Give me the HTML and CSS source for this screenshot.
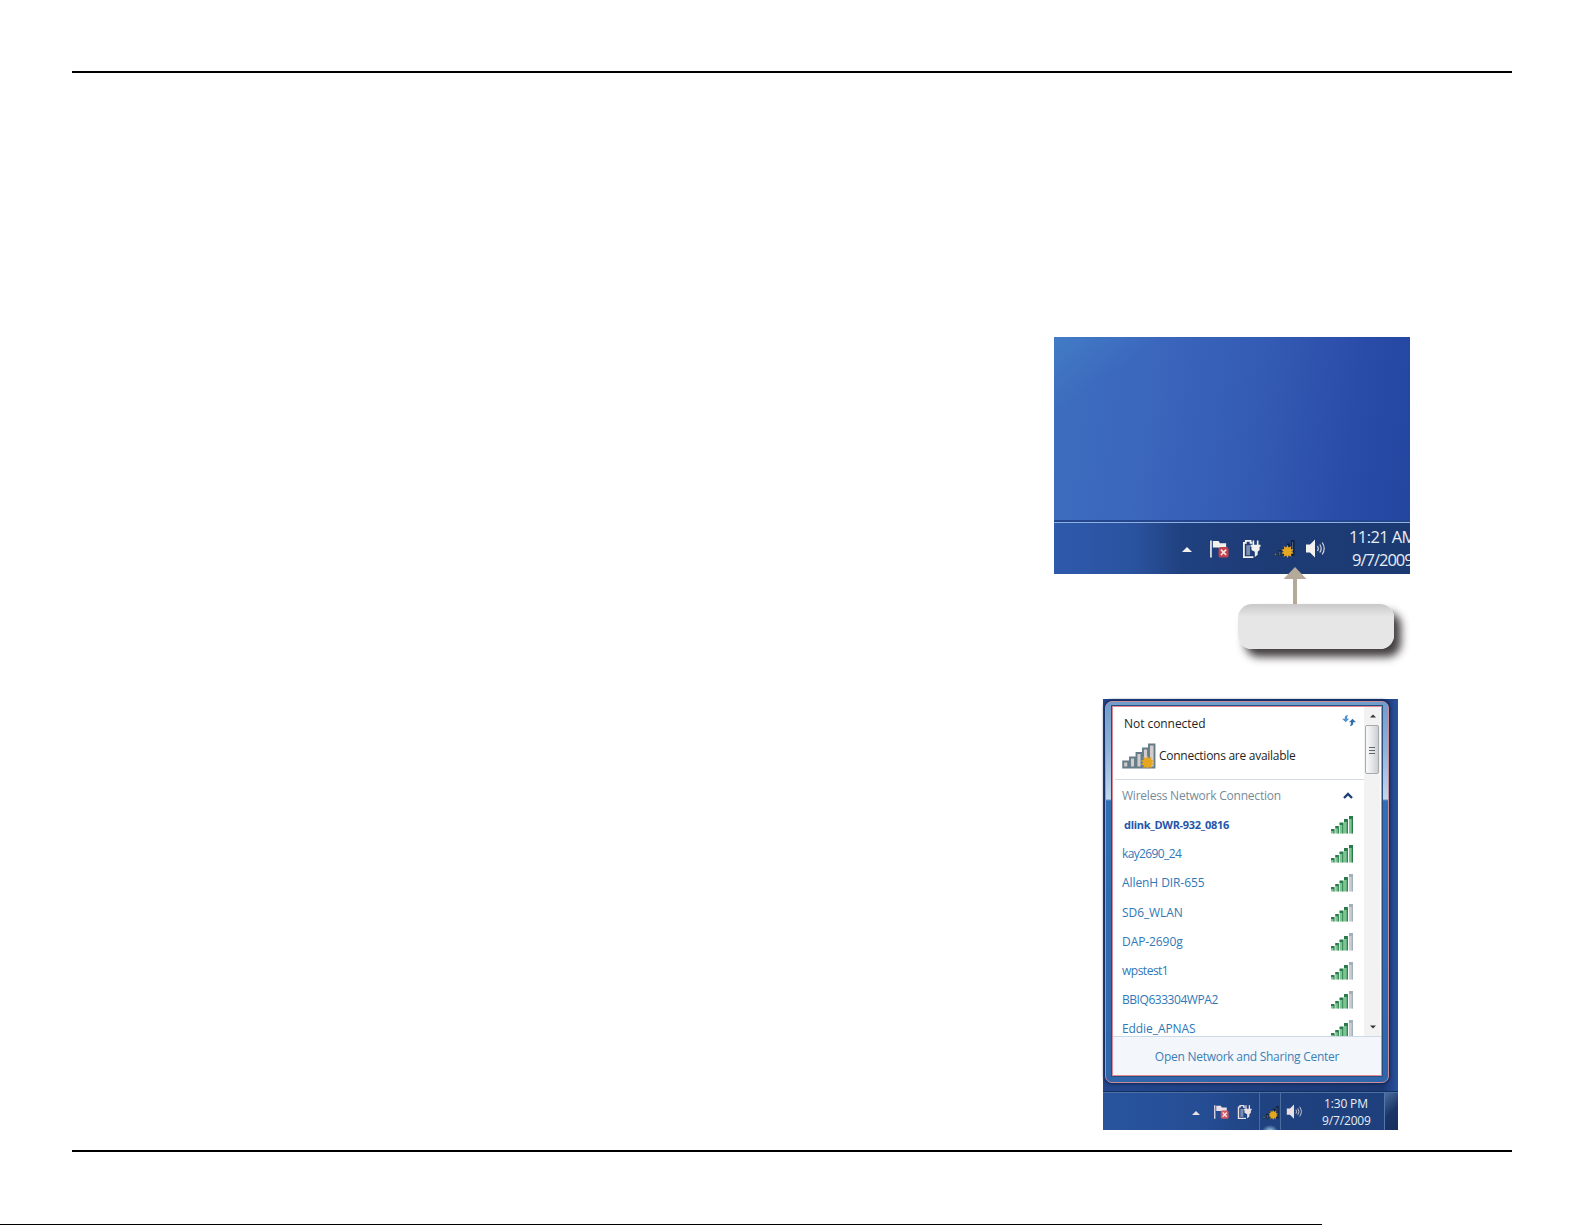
FILE: index.html
```
<!DOCTYPE html>
<html lang="en">
<head>
  <meta charset="UTF-8" />
  <meta name="viewport" content="width=device-width, initial-scale=1.0" />
  <title>Connect to a Wireless Network</title>
  <link rel="stylesheet" href="styles.css">
</head>
<body>
  <!-- shared icons -->
  <svg class="defs" width="0" height="0">
    <symbol id="up" viewBox="0 0 10 5"><path d="M5 0l5 5H0z" fill="currentColor"/></symbol>
    <symbol id="star" viewBox="0 0 14 14">
      <path d="M7 0l1.300 2.700 2.900-1.300-.6 2.900 3 .9-2.400 1.800 2.400 1.900-3 .8.6 2.900-2.900-1.200L7 14l-1.300-2.600-2.900 1.200.6-2.900-3-.8 2.400-1.900L.4 5.200l3-.9-.6-2.900 2.900 1.300z" fill="#e5a71f"/>
    </symbol>
    <symbol id="flag" viewBox="0 0 20 20">
      <path d="M1 1v18" stroke="currentColor" stroke-width="1.700"/>
      <path d="M3 1.500h6l1.500 2.500H17v6H10L9 8.500H3z" fill="currentColor"/>
      <rect x="9" y="8" width="10.500" height="11" rx="2" fill="var(--badge)"/>
      <path d="M11.500 10.700l5.500 5.600M17 10.700l-5.500 5.600" stroke="#ffe1df" stroke-width="1.800"/>
    </symbol>
    <symbol id="battery" viewBox="0 0 20 20">
      <path d="M12 18.500H2V3.500h2V1.500h5v2h2" fill="none" stroke="currentColor" stroke-width="1.900"/>
      <path d="M4.500 6h4v10.500h-4z" fill="currentColor" opacity=".45"/>
      <path d="M9 5.500h10.500v2h-1v3.500l-2 2v3l-3 2.500v-5.500L10 11V7.500H9z" fill="currentColor"/>
      <path d="M12 1v5M16.500 1v5" stroke="currentColor" stroke-width="1.700"/>
    </symbol>
    <symbol id="net" viewBox="0 0 22 20">
      <path d="M1 14h3v3H1zM5.500 11h3v6h-3zM10 8h3v9h-3zM14 4.500h3V17h-3zM18 1h3.500v16H18z" fill="#12223e"/>
      <path d="M1.500 14.500h2v2h-2zM6.300 12.500h1v4h-1zM10.700 9.500h.8v4h-.8zM19 3h.8v11H19z" fill="#8290a4" opacity=".75"/>
      <use href="#star" x="8" y="5.500" width="13" height="14"/>
    </symbol>
    <symbol id="sound" viewBox="0 0 20 20">
      <path d="M1 5.500h4L10 .5v18l-5-5H1z" fill="currentColor"/>
      <path d="M12.500 7q1.500 2.500 0 5M14.800 5.500q2.800 4 0 8M17.200 3.500q4 6 0 12" fill="none" stroke="currentColor" stroke-width="1.200" opacity=".85"/>
    </symbol>
    <symbol id="bars" viewBox="0 0 24 20">
      <path d="M1 14.500h3.500v4H1zM5.300 11.500h3.500v7H5.300zM9.600 8h3.700v10.500H9.600zM14 4.500h3.900v14H14z" fill="#7cc592"/>
      <path d="M1 14h3.500v2H1zM5.300 11h3.500v2.300H5.300zM9.600 7.500h3.700V10H9.600zM14 4h3.900v3H14zM3.500 14h1v4.500h-1zM7.800 11h1v7.500h-1zM12.300 7.500h1.200v11h-1.200zM16.700 4h1.200v14.500h-1.200z" fill="#2a7a4b"/>
      <path d="M19 1h4v17.500h-4z" fill="var(--last)"/>
      <path d="M19 1h4v3h-4zM21.700 1H23v17.500h-1.300z" fill="var(--last-edge)"/>
    </symbol>
  </svg>

  <hr class="rule">
  <main class="page">
    <div class="desktop">
      <div class="taskbar">
        <svg class="i-up"><use href="#up"/></svg>
        <svg class="i-flag"><use href="#flag"/></svg>
        <svg class="i-battery"><use href="#battery"/></svg>
        <svg class="i-net"><use href="#net"/></svg>
        <svg class="i-sound"><use href="#sound"/></svg>
        <div class="clock"><div>11:21 AM</div><div class="date">9/7/2009</div></div>
      </div>
    </div>

    <div class="callout">
      <svg class="pointer" viewBox="0 0 24 37"><path d="M12 0l11.500 12H14v25h-4V12H.5z" fill="#b5a999"/></svg>
    </div>

    <div class="desktop-small">
      <div class="flyout">
        <div class="panel">
          <div class="view">
            <div class="list">
              <div class="status">
                <span>Not connected</span>
                <svg class="refresh" viewBox="0 0 16 14">
                  <path d="M7 1Q3 1 3.500 5H.5l4 4 3.700-4H6Q5.500 3 7 1z" fill="#4e93cf"/>
                  <path d="M9 13q4 0 3.500-4H15.500L11.800 5 8 9h2.200q.3 2-1.200 4z" fill="#2f6fa8"/>
                </svg>
              </div>
              <div class="available">
                <svg class="bigbars" viewBox="0 0 34 27">
                  <path d="M1.200 18.500h5v6h-5zM8 14.500h5v10H8zM14.500 10h5v14.500h-5zM21 5.500h5v19h-5zM27 1.500h5.500v23H27z" fill="#d3ccca" stroke="#657d88" stroke-width="1.900"/>
                  <use href="#star" x="18" y="12.500" width="15" height="14"/>
                </svg>
                <span>Connections are available</span>
              </div>
              <div class="group">
                <span>Wireless Network Connection</span>
                <svg class="chevron" viewBox="0 0 10 7"><path d="M1 6l4-4 4 4" fill="none" stroke="#203f76" stroke-width="2.400"/></svg>
              </div>
              <div class="net dlink"><span>dlink_DWR-932_0816</span><svg class="full"><use href="#bars"/></svg></div>
              <div class="net kay"><span>kay2690_24</span><svg class="full"><use href="#bars"/></svg></div>
              <div class="net"><span>AllenH DIR-655</span><svg><use href="#bars"/></svg></div>
              <div class="net"><span>SD6_WLAN</span><svg><use href="#bars"/></svg></div>
              <div class="net"><span>DAP-2690g</span><svg><use href="#bars"/></svg></div>
              <div class="net wps"><span>wpstest1</span><svg><use href="#bars"/></svg></div>
              <div class="net bbiq"><span>BBIQ633304WPA2</span><svg><use href="#bars"/></svg></div>
              <div class="net"><span>Eddie_APNAS</span><svg><use href="#bars"/></svg></div>
            </div>
            <div class="scrollbar">
              <svg class="sb-up"><use href="#up"/></svg>
              <div class="thumb"><i></i><i></i><i></i></div>
              <svg class="sb-down"><use href="#up"/></svg>
            </div>
          </div>
          <div class="footer"><span>Open Network and Sharing Center</span></div>
        </div>
      </div>
      <div class="taskbar small">
        <svg class="i-up"><use href="#up"/></svg>
        <svg class="i-flag"><use href="#flag"/></svg>
        <svg class="i-battery"><use href="#battery"/></svg>
        <div class="active"><svg class="i-net"><use href="#net"/></svg></div>
        <svg class="i-sound"><use href="#sound"/></svg>
        <div class="clock"><div>1:30 PM</div><div class="date">9/7/2009</div></div>
        <div class="peek"></div>
      </div>
    </div>
  </main>
  <hr class="rule">
  <div class="edge"></div>
</body>
</html>
```

FILE: styles.css
```
* {
  box-sizing: border-box;
}
body {
  margin: 0;
  padding-top: 71px;
  height: 1225px;
  overflow: hidden;
  background: #fff;
  font-family: "Open Sans", "Noto Sans", sans-serif;
}
svg {
  display: block;
  flex: none;
}
.defs {
  position: absolute;
}
.rule {
  width: 1440px;
  height: 2px;
  margin: 0 0 0 72px;
  border: 0;
  background: #000;
}
.page {
  display: flex;
  flex-direction: column;
  align-items: flex-end;
  height: 1077px;
  padding-top: 264px;
}
.edge {
  width: 1322px;
  height: 1px;
  margin-top: 72px;
  background: #000;
}

/* desktop with the tray */
.desktop {
  display: flex;
  flex-direction: column;
  justify-content: flex-end;
  width: 356px;
  height: 237px;
  margin-right: 175px;
  background:
    linear-gradient(145deg, rgba(70, 135, 205, .55) 0, transparent 16%),
    linear-gradient(98deg, #3d6dbd 0%, #3b67bd 25%, #345bb4 55%, #294ca8 80%, #2345a0 100%);
}
.taskbar {
  --badge: #c2434f;
  display: flex;
  height: 54px;
  padding: 17px 0 0 128px;
  border-top: 2px solid #23468f;
  box-shadow: inset 0 1px #8fb0e2;
  background: linear-gradient(90deg, #2e59ac 0, #2a539f 22%, #204180 36%, #1d3b75 60%, #1c3a72 100%);
  color: #f3f1ee;
  overflow: hidden;
}
.i-up {
  width: 10px;
  height: 5px;
  margin-top: 8px;
}
.i-flag {
  width: 19px;
  height: 20px;
  margin-left: 18px;
}
.i-battery {
  width: 19px;
  height: 20px;
  margin-left: 13px;
}
.i-net {
  width: 22px;
  height: 20px;
  margin-left: 12px;
}
.i-sound {
  width: 20px;
  height: 20px;
  margin-left: 10px;
}
.clock {
  margin: -14px 0 0 24px;
  font-size: 16.5px;
  line-height: 23px;
  letter-spacing: -.6px;
  white-space: nowrap;
  color: #e6eef5;
}
.date {
  padding-left: 3px;
  letter-spacing: -1px;
}

/* callout */
.callout {
  position: relative;
  width: 156px;
  height: 45px;
  margin: 30px 191px 0 0;
  border-radius: 14px;
  background: linear-gradient(#c9c9c9, #e6e6e6 28%, #e6e6e6);
  box-shadow: 7px 8px 9px rgba(35, 31, 32, .85);
}
.pointer {
  position: absolute;
  left: 45px;
  top: -37px;
  width: 24px;
  height: 37px;
}

/* desktop with the network list */
.desktop-small {
  display: flex;
  flex-direction: column;
  justify-content: space-between;
  width: 295px;
  height: 431px;
  margin: 50px 187px 0 0;
  background: linear-gradient(90deg, #23468d 0, #1c3874 95%, #28529f 100%);
}
.flyout {
  width: 284px;
  height: 382px;
  margin: 2px 0 0 2px;
  padding: 4px 6px 6px;
  border: 1px solid #c98e9b;
  border-radius: 7px;
  background: linear-gradient(#6f9dcc 0, #8eb1d8 12%, #bfd5ec 25%, #c3d7ed 25.500%, #316fb5 26%, #2f66ab 100%);
  box-shadow: 0 0 3px 1px #0e2552;
}
.panel {
  height: 370px;
  border: 1px solid #de8891;
  outline: 1px solid #294d80;
  background: #fff;
}
.view {
  display: flex;
  height: 329px;
  overflow: hidden;
}
.list {
  width: 251px;
  font-size: 12px;
  line-height: 18px;
  white-space: nowrap;
  color: #2f78b8;
}
.status {
  display: flex;
  justify-content: space-between;
  height: 36px;
  padding: 8px 7px 0 11px;
  color: #241f24;
  letter-spacing: -.05px;
}
.refresh {
  width: 16px;
  height: 13px;
  margin-top: -1px;
}
.available {
  display: flex;
  height: 37px;
  margin-left: 2px;
  padding-left: 7px;
  border-bottom: 1px solid #d5dbe0;
  color: #241f24;
  letter-spacing: -.27px;
}
.available span {
  padding: 4px 0 0 3px;
}
.bigbars {
  width: 34px;
  height: 27px;
}
.group {
  display: flex;
  justify-content: space-between;
  height: 28px;
  padding: 7px 11px 0 9px;
  color: #758c9a;
  letter-spacing: -.22px;
}
.chevron {
  width: 10px;
  height: 7px;
  margin-top: 5px;
}
.net {
  display: flex;
  justify-content: space-between;
  height: 29.200px;
  padding: 8px 10px 0 9px;
  letter-spacing: -.08px;
}
.net svg {
  --last: #c8ced1;
  --last-edge: #a4b0b8;
  width: 24px;
  height: 20px;
  margin-top: -1px;
}
.net svg.full {
  --last: #7cc592;
  --last-edge: #2a7a4b;
}
.dlink {
  padding-left: 11px;
  font-size: 11px;
  font-weight: 700;
  letter-spacing: -.3px;
  color: #2555a9;
}
.kay {
  letter-spacing: -.62px;
}
.wps {
  letter-spacing: -.5px;
}
.bbiq {
  letter-spacing: -.45px;
}
.scrollbar {
  width: 16px;
  padding-top: 7px;
  background: #f2f2f3;
  color: #30353d;
}
.sb-up {
  width: 6px;
  height: 4px;
  margin-left: 6px;
}
.thumb {
  display: flex;
  flex-direction: column;
  align-items: center;
  gap: 1px;
  height: 49px;
  margin: 7px 1px 0;
  padding-top: 20px;
  border: 1px solid #a6a9ad;
  border-radius: 2px;
  background: linear-gradient(90deg, #fafafa, #e6e7e9 50%, #cbcdd1);
}
.thumb i {
  width: 6px;
  height: 2px;
  border-bottom: 1px solid #5e6670;
}
.sb-down {
  width: 6px;
  height: 4px;
  margin: 251px 0 0 6px;
  transform: rotate(180deg);
}
.footer {
  height: 39px;
  padding-top: 11px;
  border-top: 1px solid #ccdae6;
  background: #f3f6fb;
  font-size: 12px;
  line-height: 18px;
  letter-spacing: -.26px;
  text-align: center;
  white-space: nowrap;
  color: #3b7fb6;
}
.small {
  --badge: #d05663;
  height: 39px;
  padding: 12px 0 0 89px;
  border-top: 1px solid #15305f;
  box-shadow: inset 0 1px #4a70a8;
  background: linear-gradient(90deg, #28549f 0, #254d93 35%, #1f4280 55%, #1e3f7b 100%);
  color: #eadfe3;
}
.small .i-up {
  width: 8px;
  height: 4px;
  margin-top: 7px;
}
.small .i-flag {
  width: 15px;
  height: 16px;
  margin-left: 14px;
}
.small .i-battery {
  width: 15px;
  height: 16px;
  margin-left: 8px;
}
.active {
  width: 22px;
  height: 38px;
  margin: -11px 0 0 7px;
  padding: 12px 0 0 2px;
  border: solid #4a6d9f;
  border-width: 0 1px;
  background: radial-gradient(ellipse 8px 6px at 50% 100%, #a7d6f0, transparent);
}
.small .i-net {
  width: 17px;
  height: 16px;
  margin: 0;
}
.small .i-sound {
  width: 16px;
  height: 16px;
  margin-left: 5px;
}
.small .clock {
  width: 56px;
  margin: -9px 0 0 22px;
  font-size: 12px;
  line-height: 17px;
  letter-spacing: -.15px;
}
.small .date {
  padding: 0;
  margin-left: -2px;
  letter-spacing: -.15px;
}
.peek {
  width: 14px;
  height: 38px;
  margin: -11px 0 0 auto;
  border-left: 1px solid #5377a8;
  background: linear-gradient(135deg, #4a6d9f, #1b3568 50%, #172e5c);
}
```
